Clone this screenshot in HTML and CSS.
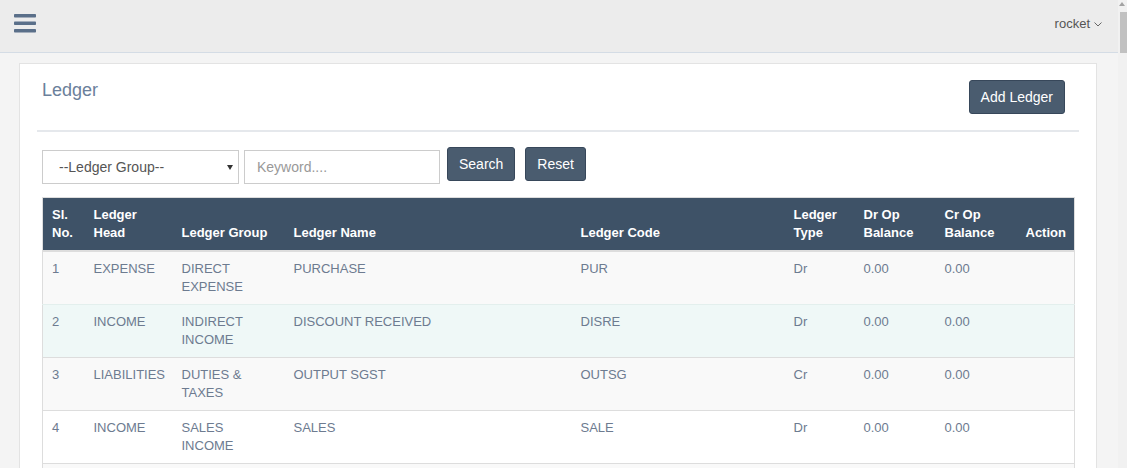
FILE: index.html
```html
<!DOCTYPE html>
<html lang="en">
<head>
<meta charset="utf-8">
<title>Ledger</title>
<link rel="stylesheet" href="styles.css">
</head>
<body>
<div class="viewport">
<header class="topbar">
  <button class="menu-toggle" type="button" aria-label="Menu">
    <svg width="22" height="19" viewBox="0 0 22 19"><rect x="0" y="0" width="22" height="3.5" rx="0.8" fill="#5a6f89"/><rect x="0" y="7.5" width="22" height="3.5" rx="0.8" fill="#5a6f89"/><rect x="0" y="15" width="22" height="3.5" rx="0.8" fill="#5a6f89"/></svg>
  </button>
  <div class="user">rocket <svg class="caret" width="8" height="5" viewBox="0 0 8 5"><polyline points="0.5,0.5 4,4 7.5,0.5" fill="none" stroke="#666" stroke-width="1"/></svg></div>
</header>
<main class="page">
  <section class="card">
    <div class="card-head">
      <h1 class="title">Ledger</h1>
      <button class="btn" type="button">Add Ledger</button>
    </div>
    <hr class="divider">
    <form class="filters">
      <span class="select-wrap">
        <select class="field select"><option>--Ledger Group--</option></select>
      </span>
      <input class="field keyword" type="text" placeholder="Keyword....">
      <button class="btn" type="button">Search</button>
      <button class="btn reset" type="button">Reset</button>
    </form>
    <table class="ledger">
      <colgroup>
        <col class="c1"><col class="c2"><col class="c3"><col class="c4"><col class="c5"><col class="c6"><col class="c7"><col class="c8"><col class="c9">
      </colgroup>
      <thead>
        <tr><th>Sl. No.</th><th>Ledger Head</th><th>Ledger Group</th><th>Ledger Name</th><th>Ledger Code</th><th>Ledger Type</th><th>Dr Op Balance</th><th>Cr Op Balance</th><th>Action</th></tr>
      </thead>
      <tbody>
        <tr><td>1</td><td>EXPENSE</td><td>DIRECT EXPENSE</td><td>PURCHASE</td><td>PUR</td><td>Dr</td><td>0.00</td><td>0.00</td><td></td></tr>
        <tr class="hl"><td>2</td><td>INCOME</td><td>INDIRECT INCOME</td><td>DISCOUNT RECEIVED</td><td>DISRE</td><td>Dr</td><td>0.00</td><td>0.00</td><td></td></tr>
        <tr><td>3</td><td>LIABILITIES</td><td>DUTIES &amp; TAXES</td><td>OUTPUT SGST</td><td>OUTSG</td><td>Cr</td><td>0.00</td><td>0.00</td><td></td></tr>
        <tr><td>4</td><td>INCOME</td><td>SALES INCOME</td><td>SALES</td><td>SALE</td><td>Dr</td><td>0.00</td><td>0.00</td><td></td></tr>
        <tr><td>&nbsp;</td><td></td><td></td><td></td><td></td><td></td><td></td><td></td><td></td></tr>
      </tbody>
    </table>
  </section>
</main>
</div>
<div class="scrollbar" aria-hidden="true">
  <div class="scroll-arrow"></div>
  <div class="scroll-thumb"></div>
</div>
</body>
</html>
```
FILE: styles.css
```css
html, body { height: 100%; }

body {
  margin: 0;
  overflow: hidden;
  display: flex;
  background: #f4f4f4;
  font-family: "Liberation Sans", Arial, Helvetica, sans-serif;
  font-size: 13px;
  color: #555;
}

.viewport {
  flex: 1;
  min-width: 0;
  height: 100%;
  overflow: hidden;
}

.scrollbar {
  width: 9px;
  flex: none;
  background: #f1f1f1;
  display: flex;
  flex-direction: column;
  align-items: flex-end;
}
.scroll-arrow {
  margin: 2px 2px 0 0;
  width: 0;
  height: 0;
  border-left: 3px solid transparent;
  border-right: 3px solid transparent;
  border-bottom: 4px solid #a3a3a3;
}
.scroll-thumb {
  margin-top: 6px;
  width: 7px;
  height: 41px;
  background: #c1c1c1;
}

.topbar {
  height: 52px;
  background: #ececec;
  border-bottom: 1px solid #d4dce5;
  display: flex;
  justify-content: space-between;
  align-items: flex-start;
}

.menu-toggle {
  margin: 14px 0 0 14px;
  padding: 0;
  border: 0;
  background: none;
  line-height: 0;
}

.user {
  margin: 15px 16px 0 0;
  font-size: 13px;
  line-height: 18px;
  color: #555;
  display: flex;
  align-items: center;
  gap: 4px;
}
.caret { margin-top: 1px; }

.page {
  padding: 10px 21px 0 19px;
}

.card {
  background: #fff;
  border: 1px solid #e3e3e3;
  padding: 0 22px;
  min-height: 600px;
}

.card-head {
  display: flex;
  justify-content: space-between;
  align-items: flex-start;
  padding: 16px 9px 16px 0;
}

.title {
  margin: 0;
  font-size: 18px;
  line-height: 20px;
  font-weight: normal;
  color: #6b809b;
}

.btn {
  height: 34px;
  padding: 0 11px;
  font-family: inherit;
  font-size: 14px;
  color: #fff;
  background: #4a5c6f;
  border: 1px solid #37475a;
  border-radius: 3px;
}

.divider {
  margin: 0 -5px;
  height: 2px;
  border: 0;
  background: #e5e8ec;
}

.filters {
  display: flex;
  align-items: flex-start;
  padding-top: 15px;
  margin-bottom: 13px;
}

.field {
  height: 34px;
  margin-top: 3px;
  box-sizing: border-box;
  border: 1px solid #ccc;
  background: #fff;
  font-family: inherit;
  font-size: 14px;
  color: #555;
  border-radius: 0;
}

.select-wrap { position: relative; display: block; }
.select-wrap::after {
  content: "";
  position: absolute;
  left: 185px;
  top: 18px;
  border-left: 3.5px solid transparent;
  border-right: 3.5px solid transparent;
  border-top: 5px solid #333;
}
.select {
  width: 197px;
  padding: 0 0 0 16px;
  -webkit-appearance: none;
  appearance: none;
}

.keyword {
  width: 196px;
  margin-left: 5px;
  padding: 0 12px;
}
.keyword::placeholder { color: #999; }

.filters .btn { margin-left: 7px; }
.filters .reset { margin-left: 10px; }

.ledger {
  width: 100%;
  table-layout: fixed;
  border-collapse: collapse;
  border: 1px solid #ddd;
  font-size: 13px;
  line-height: 18px;
}
.c1 { width: 42px; }
.c2 { width: 88px; }
.c3 { width: 112px; }
.c4 { width: 287px; }
.c5 { width: 213px; }
.c6 { width: 70px; }
.c7 { width: 81px; }
.c8 { width: 81px; }
.c9 { width: 58px; }

.ledger th {
  background: #3e5267;
  color: #fff;
  font-weight: bold;
  text-align: left;
  vertical-align: bottom;
  padding: 8px 9px;
  border-bottom: 2px solid #ddd;
}

.ledger td {
  padding: 8px 9px;
  vertical-align: top;
  color: #6d7b90;
  border-top: 1px solid #ddd;
  white-space: normal;
}

.ledger tbody tr:nth-child(odd) td { background: #f9f9f9; }
.ledger tbody tr.hl td { background: #eff8f7; border-top-color: #e3efed; }
```
